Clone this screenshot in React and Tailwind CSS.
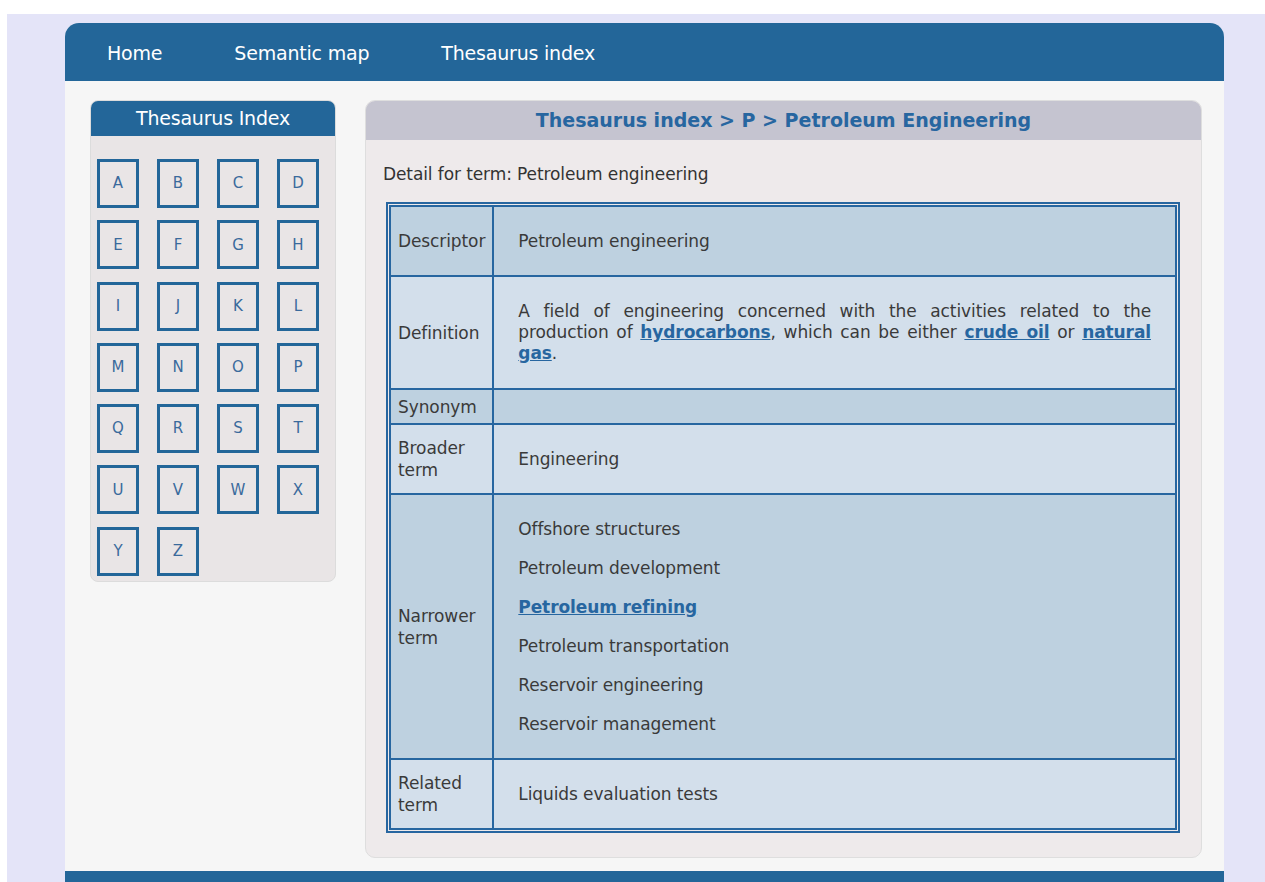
import React from "react";

const letters = "ABCDEFGHIJKLMNOPQRSTUVWXYZ".split("");

const font = { fontFamily: '"DejaVu Sans", "Liberation Sans", sans-serif' };

function Label({ children }) {
  return (
    <td className="w-[103px] border-2 border-[#2766a0] px-[7px] align-middle text-[17px] leading-[22px] text-[#3a3a3a]">
      {children}
    </td>
  );
}

function Link({ children }) {
  return <a className="font-bold text-[#2766a0] underline">{children}</a>;
}

export default function App() {
  return (
    <div className="min-h-[882px] bg-white" style={font}>
      <div className="ml-[7px] mt-[14px] h-[868px] overflow-hidden bg-[#e4e4f8] pl-[58px] pr-[41px] pt-[9px]">
        <div className="flex h-full flex-col overflow-hidden rounded-t-[14px] bg-[#f6f6f6]">
          {/* top navigation */}
          <nav className="flex h-[58px] shrink-0 items-center bg-[#236699] pl-[42px] pt-[3px] text-[19px] tracking-[-0.2px] text-white">
            <a className="mr-[72px]">Home</a>
            <a className="mr-[72px]">Semantic map</a>
            <a>Thesaurus index</a>
          </nav>

          <div className="flex flex-1 gap-[29px] pl-[25px] pr-[22px] pt-[19px]">
            {/* letter index */}
            <aside className="h-[482px] w-[246px] shrink-0 overflow-hidden rounded-[8px] border border-[#dcdcdc] bg-[#e9e5e6]">
              <div className="flex h-[35px] items-center justify-center bg-[#236699] text-[19px] tracking-[-0.2px] text-white">
                Thesaurus Index
              </div>
              <div className="grid grid-cols-[repeat(4,42px)] gap-x-[18px] gap-y-[12.3px] pl-[6px] pt-[23px]">
                {letters.map((l) => (
                  <a
                    key={l}
                    className="flex h-[49px] w-[42px] items-center justify-center border-[3px] border-[#236699] text-[15px] text-[#3a6a9c]"
                  >
                    {l}
                  </a>
                ))}
              </div>
            </aside>

            {/* term detail */}
            <section className="mb-[13px] flex-1 overflow-hidden rounded-[10px] border border-[#dedede] bg-[#eeeaeb]">
              <div className="flex h-[39px] items-center justify-center bg-[#c5c4d0] text-[19px] font-bold text-[#2766a0]">
                Thesaurus index &gt; P &gt; Petroleum Engineering
              </div>
              <p className="pl-[17px] pt-[23px] text-[17px] leading-[22px] tracking-[-0.1px] text-[#333]">
                Detail for term: Petroleum engineering
              </p>
              <div className="ml-[20px] mr-[21px] mt-[17px] border-2 border-[#2766a0] p-px">
                <table className="w-full border-collapse border-2 border-[#2766a0] text-[17px] leading-[21px] tracking-[-0.1px] text-[#3a3a3a]">
                  <tbody>
                    <tr className="h-[70px] bg-[#bed1e0]">
                      <Label>Descriptor</Label>
                      <td className="border-2 border-[#2766a0] px-[24px]">Petroleum engineering</td>
                    </tr>
                    <tr className="bg-[#d3dfeb]">
                      <Label>Definition</Label>
                      <td className="border-2 border-[#2766a0] px-[24px] py-[24px] text-justify">
                        A field of engineering concerned with the activities related to the production of{" "}
                        <Link>hydrocarbons</Link>, which can be either <Link>crude oil</Link> or{" "}
                        <Link>natural gas</Link>.
                      </td>
                    </tr>
                    <tr className="h-[35px] bg-[#bed1e0]">
                      <Label>Synonym</Label>
                      <td className="border-2 border-[#2766a0]"></td>
                    </tr>
                    <tr className="h-[70px] bg-[#d3dfeb]">
                      <Label>
                        Broader
                        <br />
                        term
                      </Label>
                      <td className="border-2 border-[#2766a0] px-[24px]">Engineering</td>
                    </tr>
                    <tr className="h-[265px] bg-[#bed1e0]">
                      <Label>
                        Narrower
                        <br />
                        term
                      </Label>
                      <td className="border-2 border-[#2766a0] px-[24px]">
                        <div className="flex flex-col gap-[18px]">
                          <span>Offshore structures</span>
                          <span>Petroleum development</span>
                          <span>
                            <Link>Petroleum refining</Link>
                          </span>
                          <span>Petroleum transportation</span>
                          <span>Reservoir engineering</span>
                          <span>Reservoir management</span>
                        </div>
                      </td>
                    </tr>
                    <tr className="h-[70px] bg-[#d3dfeb]">
                      <Label>
                        Related
                        <br />
                        term
                      </Label>
                      <td className="border-2 border-[#2766a0] px-[24px]">Liquids evaluation tests</td>
                    </tr>
                  </tbody>
                </table>
              </div>
            </section>
          </div>

          {/* footer strip */}
          <div className="h-[11px] shrink-0 bg-[#236699]"></div>
        </div>
      </div>
    </div>
  );
}
